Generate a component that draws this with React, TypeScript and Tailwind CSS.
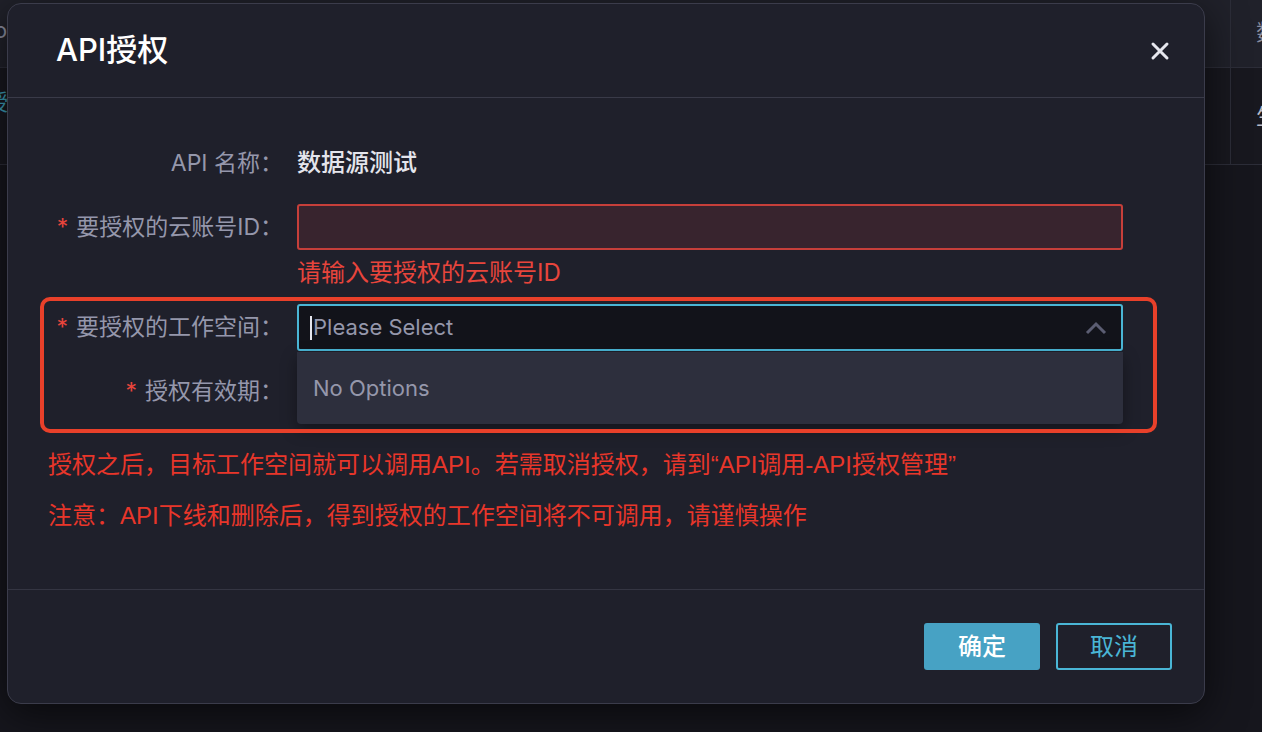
import React from 'react';

const font = { fontFamily: 'Inter, "Noto Sans CJK SC", sans-serif' };

const Label = ({ text, required }: { text: string; required?: boolean }) => (
  <div className="w-[235px] shrink-0 text-right text-[23px] text-[#9597ab] whitespace-nowrap">
    {required && <span className="text-[#e8453c] mr-[8px]">*</span>}
    {text}
  </div>
);

const BackgroundTable = () => (
  <div className="absolute inset-0">
    <div className="h-[68px] bg-[#20212a] border-b border-[#2c2d38] flex">
      <div className="w-[1231px] border-r border-[#2c2d38] text-[22px] text-[#8a8c9e] pt-[14px] overflow-hidden whitespace-nowrap">
        <span className="-ml-[6px] inline-block">o</span>
      </div>
      <div className="flex-1 text-[22px] text-[#8a8c9e] pt-[16px] pl-[25px] overflow-hidden whitespace-nowrap">数据</div>
    </div>
    <div className="h-[97px] bg-[#18181f] border-b border-[#2c2d38] flex">
      <div className="w-[1231px] border-r border-[#2c2d38] text-[22px] text-[#3d9db8] pt-[18px] overflow-hidden whitespace-nowrap">
        <span className="-ml-[14px] inline-block">授</span>
      </div>
      <div className="flex-1 text-[22px] text-[#b9bbc8] pt-[32px] pl-[25px] overflow-hidden whitespace-nowrap">生效</div>
    </div>
  </div>
);

export default function App() {
  return (
    <div className="relative w-[1262px] h-[732px] overflow-hidden bg-[#16161d]" style={font}>
      <BackgroundTable />

      <div className="absolute left-[7px] top-[3px] w-[1198px] h-[701px] rounded-[14px] border border-[#3b3c4b] bg-[#1f202b] shadow-[0_10px_40px_rgba(0,0,0,0.6)] flex flex-col">
        {/* header */}
        <div className="h-[94px] shrink-0 border-b border-[#393a48] flex items-center justify-between pl-[48px] pr-[34px]">
          <span className="text-[31px] text-white font-medium">API授权</span>
          <svg width="20" height="20" viewBox="0 0 20 20" className="text-[#e6e7ee]">
            <path d="M3 3 L17 17 M17 3 L3 17" stroke="currentColor" strokeWidth="3" strokeLinecap="round" />
          </svg>
        </div>

        {/* body */}
        <div className="relative flex-1 border-b border-[#343542] pl-[40px] pr-[40px] pt-[45px]">
          <div className="flex items-center h-10">
            <Label text="API 名称：" />
            <div className="ml-[14px] text-[24px] text-[#e4e5ec] font-medium">数据源测试</div>
          </div>

          <div className="flex items-center mt-[21px] h-[46px]">
            <Label text="要授权的云账号ID：" required />
            <div className="ml-[14px] w-[826px] h-[46px] rounded-[3px] border-2 border-[#c63f3a] bg-[#38242e]" />
          </div>
          <div className="h-[46px] flex items-center pl-[249px] text-[24px] text-[#e8453c]">请输入要授权的云账号ID</div>

          <div className="relative flex items-center mt-[8px] h-[47px]">
            <Label text="要授权的工作空间：" required />
            <div className="ml-[14px] w-[826px] h-[47px] rounded-[3px] border-2 border-[#4ab6d6] bg-[#12131a] flex items-center pl-[11px] pr-[14px]">
              <span className="w-[2px] h-[24px] bg-[#e6e6ee] mr-[1px]" />
              <span className="text-[22px] text-[#9597ab] flex-1">Please Select</span>
              <svg width="22" height="14" viewBox="0 0 22 14">
                <path d="M2 12 L11 3 L20 12" fill="none" stroke="#5b5d72" strokeWidth="3" />
              </svg>
            </div>
            <div className="absolute left-[249px] top-[48px] w-[826px] h-[72px] rounded-b-[4px] bg-[#2d2f3d] shadow-[0_6px_16px_rgba(0,0,0,0.35)] flex items-center pl-[16px] text-[22px] text-[#9597ab] z-10">
              No Options
            </div>
          </div>

          <div className="flex items-center mt-[17px] h-[46px]">
            <Label text="授权有效期：" required />
          </div>

          <div className="mt-[36px] h-[30px] flex items-center text-[24px] text-[#e8362a] whitespace-nowrap font-['Liberation_Sans','Noto_Sans_CJK_SC',sans-serif]">
            授权之后，目标工作空间就可以调用API。若需取消授权，请到“API调用-API授权管理”
          </div>
          <div className="mt-[21px] h-[30px] flex items-center text-[24px] text-[#e8362a] whitespace-nowrap font-['Liberation_Sans','Noto_Sans_CJK_SC',sans-serif]">
            注意：API下线和删除后，得到授权的工作空间将不可调用，请谨慎操作
          </div>

          <div className="absolute left-[32px] top-[199px] w-[1117px] h-[136px] rounded-[10px] border-[4px] border-[#e8402a] z-20 pointer-events-none" />
        </div>

        {/* footer */}
        <div className="h-[113px] shrink-0 flex justify-end items-start pt-[33px] pr-[32px] gap-[16px]">
          <button className="w-[116px] h-[47px] rounded-[3px] bg-[#47a2c4] text-white text-[24px] font-medium">确定</button>
          <button className="w-[116px] h-[47px] rounded-[3px] border-2 border-[#4ab6d6] text-[#4ab6d6] text-[24px]">取消</button>
        </div>
      </div>
    </div>
  );
}
